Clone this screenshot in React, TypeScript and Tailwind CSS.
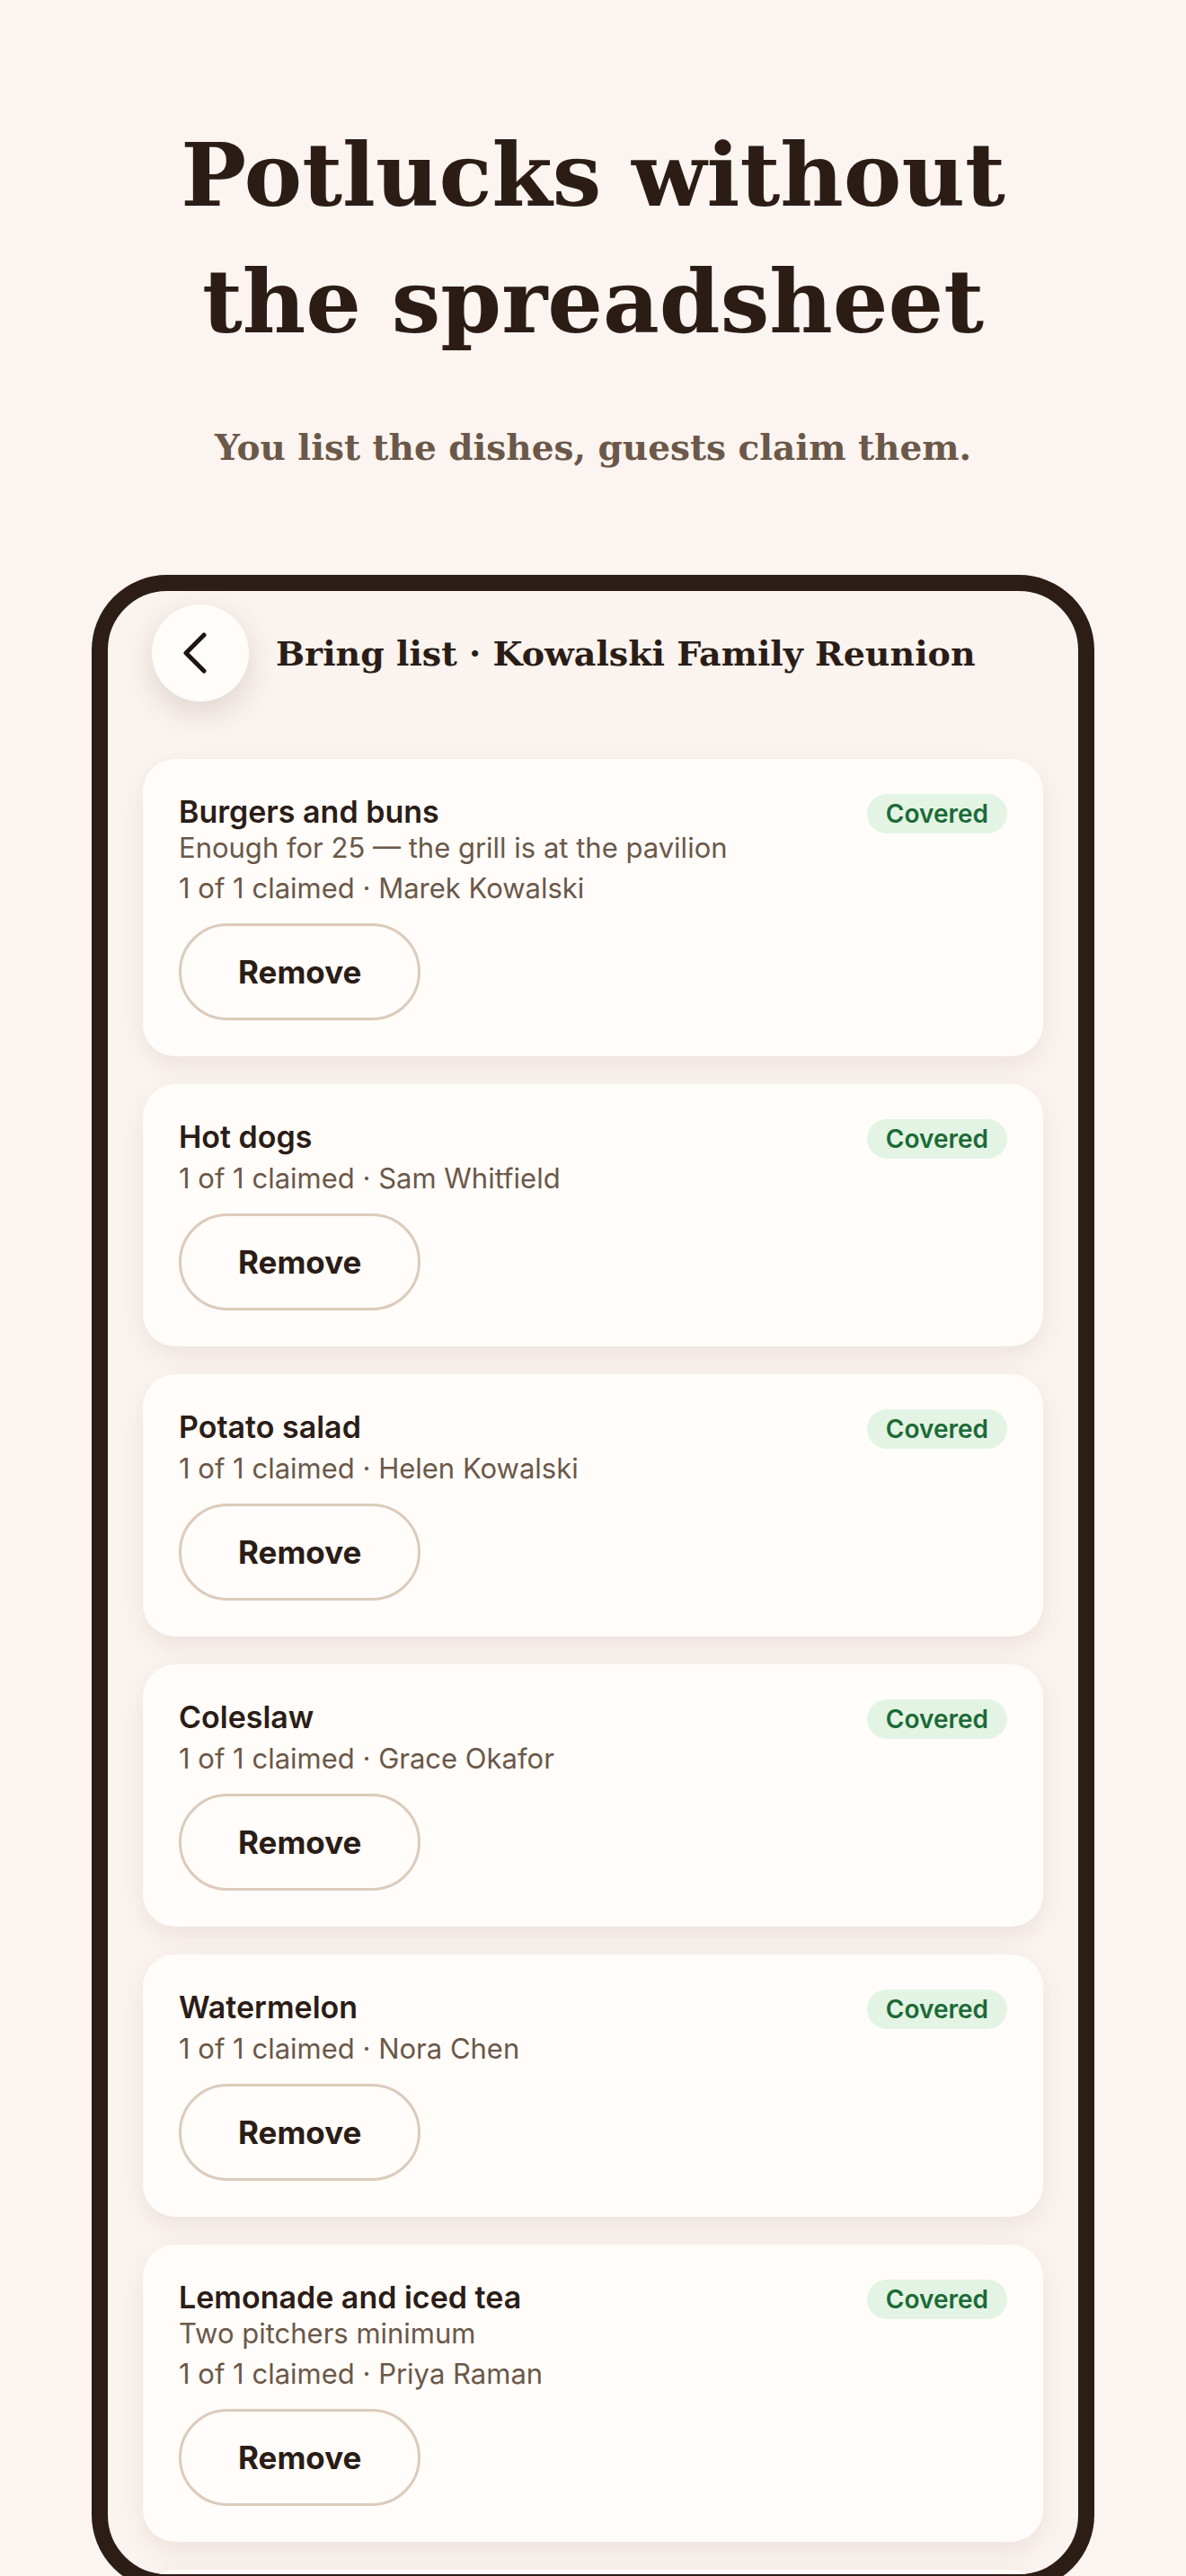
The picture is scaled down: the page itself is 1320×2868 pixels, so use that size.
import React from 'react';

interface Dish {
  name: string;
  note?: string;
  claimedBy: string;
}

const dishes: Dish[] = [
  { name: 'Burgers and buns', note: 'Enough for 25 — the grill is at the pavilion', claimedBy: 'Marek Kowalski' },
  { name: 'Hot dogs', claimedBy: 'Sam Whitfield' },
  { name: 'Potato salad', claimedBy: 'Helen Kowalski' },
  { name: 'Coleslaw', claimedBy: 'Grace Okafor' },
  { name: 'Watermelon', claimedBy: 'Nora Chen' },
  { name: 'Lemonade and iced tea', note: 'Two pitchers minimum', claimedBy: 'Priya Raman' },
];

const serif = "font-['DejaVu_Serif',serif]";
const sans = "font-['Inter','Noto_Sans',sans-serif]";

const cardShell = 'rounded-[36px] bg-[#fffcfa] shadow-[0_10px_28px_rgba(110,70,45,0.09)]';

function DishCard({ dish }: { dish: Dish }) {
  return (
    <div className={`${cardShell} px-[40px] pt-[39px] pb-[40px]`}>
      <div className="flex items-start justify-between">
        <div className="min-w-0">
          <p className="text-[34px] leading-[40px] font-semibold text-[#2b1d16]">{dish.name}</p>
          {dish.note && <p className="text-[31px] leading-[39px] text-[#6b5848]">{dish.note}</p>}
          <p className="mt-[6px] text-[31px] leading-[39px] text-[#6b5848]">1 of 1 claimed · {dish.claimedBy}</p>
        </div>
        <span className="shrink-0 rounded-full bg-[#e3f4e5] px-[21px] text-[28px] leading-[44px] font-semibold text-[#1c6a36]">
          Covered
        </span>
      </div>
      <button
        type="button"
        className="mt-[20px] h-[108px] rounded-full border-[3px] border-[#dccbbb] bg-[#fffcfa] px-[63px] text-[35px] font-bold text-[#2b1d16]"
      >
        Remove
      </button>
    </div>
  );
}

export default function App() {
  return (
    <div className={`min-h-screen bg-[#fbf4f0] pt-[125px] text-center ${sans}`}>
      {/* Hero */}
      <h1 className={`${serif} text-[97px] leading-[141px] font-bold text-[#2b1d16]`}>
        Potlucks without
        <br />
        the spreadsheet
      </h1>
      <p className={`${serif} mt-[65px] text-[39px] leading-[53px] font-bold text-[#6b5848]`}>
        You list the dishes, guests claim them.
      </p>

      {/* Phone */}
      <div className="mx-auto mt-[115px] h-[2244px] w-[1116px] overflow-hidden rounded-[84px] border-[18px] border-[#2c1e17] bg-[#faf3ef] text-left">
        <div className="flex items-center pt-[15px] pl-[49px]">
          <button
            type="button"
            className="flex h-[108px] w-[108px] shrink-0 items-center justify-center rounded-full bg-[#fffcfa] shadow-[0_12px_34px_rgba(90,55,35,0.16)]"
          >
            <svg width="32" height="48" viewBox="0 0 32 48" fill="none" className="mr-[6px]">
              <path d="M23 4 L3 24 L23 44" stroke="#1f1612" strokeWidth="5" strokeLinecap="round" strokeLinejoin="round" />
            </svg>
          </button>
          <h2 className={`${serif} ml-[30px] text-[38px] font-bold text-[#2b1d16]`}>
            Bring list · Kowalski Family Reunion
          </h2>
        </div>

        <div className="mt-[64px] flex flex-col gap-[31px] px-[39px]">
          {dishes.map((d) => (
            <DishCard key={d.name} dish={d} />
          ))}
          {/* next card peeking under the frame edge */}
          <div className={`${cardShell} h-[292px]`} />
        </div>
      </div>
    </div>
  );
}
